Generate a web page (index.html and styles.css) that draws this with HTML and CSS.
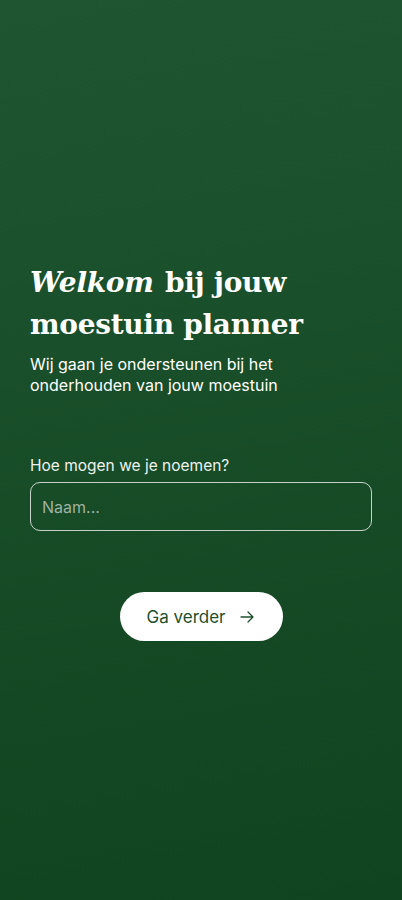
FILE: index.html
```html
<!DOCTYPE html>
<html lang="nl">
<head>
<meta charset="utf-8">
<meta name="viewport" content="width=device-width, initial-scale=1">
<title>Welkom</title>
<link rel="stylesheet" href="styles.css">
</head>
<body>
<main class="screen">
  <section class="intro">
    <h1 class="title"><em>Welkom</em> bij jouw moestuin planner</h1>
    <p class="subtitle">Wij gaan je ondersteunen bij het onderhouden van jouw moestuin</p>
  </section>
  <form class="name-form">
    <label class="label" for="name">Hoe mogen we je noemen?</label>
    <input class="input" id="name" type="text" placeholder="Naam...">
    <button class="button" type="button">Ga verder
      <svg class="arrow" width="16" height="16" viewBox="0 0 16 16" fill="none" stroke="currentColor" stroke-width="1.3" stroke-linecap="round" stroke-linejoin="round"><path d="M2 8h12M9 3l5 5-5 5"/></svg>
    </button>
  </form>
</main>
</body>
</html>
```
FILE: styles.css
```css
* { box-sizing: border-box; }
html, body { margin: 0; height: 100%; }
body {
  font-family: "Inter", "Noto Sans", sans-serif;
  color: #fff;
}
.screen {
  min-height: 900px;
  background: linear-gradient(170deg, #1f5631 0%, #10431f 100%);
  padding: 262px 30px 0 30px;
  display: flex;
  flex-direction: column;
}
.title {
  margin: 0;
  font-family: "DejaVu Serif", "Liberation Serif", serif;
  font-weight: 700;
  font-size: 28px;
  line-height: 42px;
  letter-spacing: -0.3px;
}
.title em { font-style: italic; padding-right: 2px; }
.subtitle {
  margin: 8px 0 0;
  max-width: 300px;
  font-size: 16px;
  line-height: 21px;
}
.name-form {
  margin-top: 60px;
  display: flex;
  flex-direction: column;
}
.label {
  font-size: 15.5px;
  line-height: 20px;
  color: #eef2ee;
}
.input {
  margin-top: 6px;
  height: 49px;
  border: 1px solid rgba(255,255,255,0.75);
  border-radius: 10px;
  background: transparent;
  padding: 0 11px;
  font-family: inherit;
  font-size: 16px;
  color: #fff;
  outline: none;
}
.input::placeholder { color: #9fb2a3; }
.button {
  margin: 61px auto 0;
  width: 163px;
  height: 49px;
  border: none;
  border-radius: 25px;
  background: #fff;
  color: #1d4f2d;
  font-family: inherit;
  font-size: 17px;
  display: flex;
  align-items: center;
  justify-content: center;
  gap: 14px;
}
.arrow { display: block; }
```
